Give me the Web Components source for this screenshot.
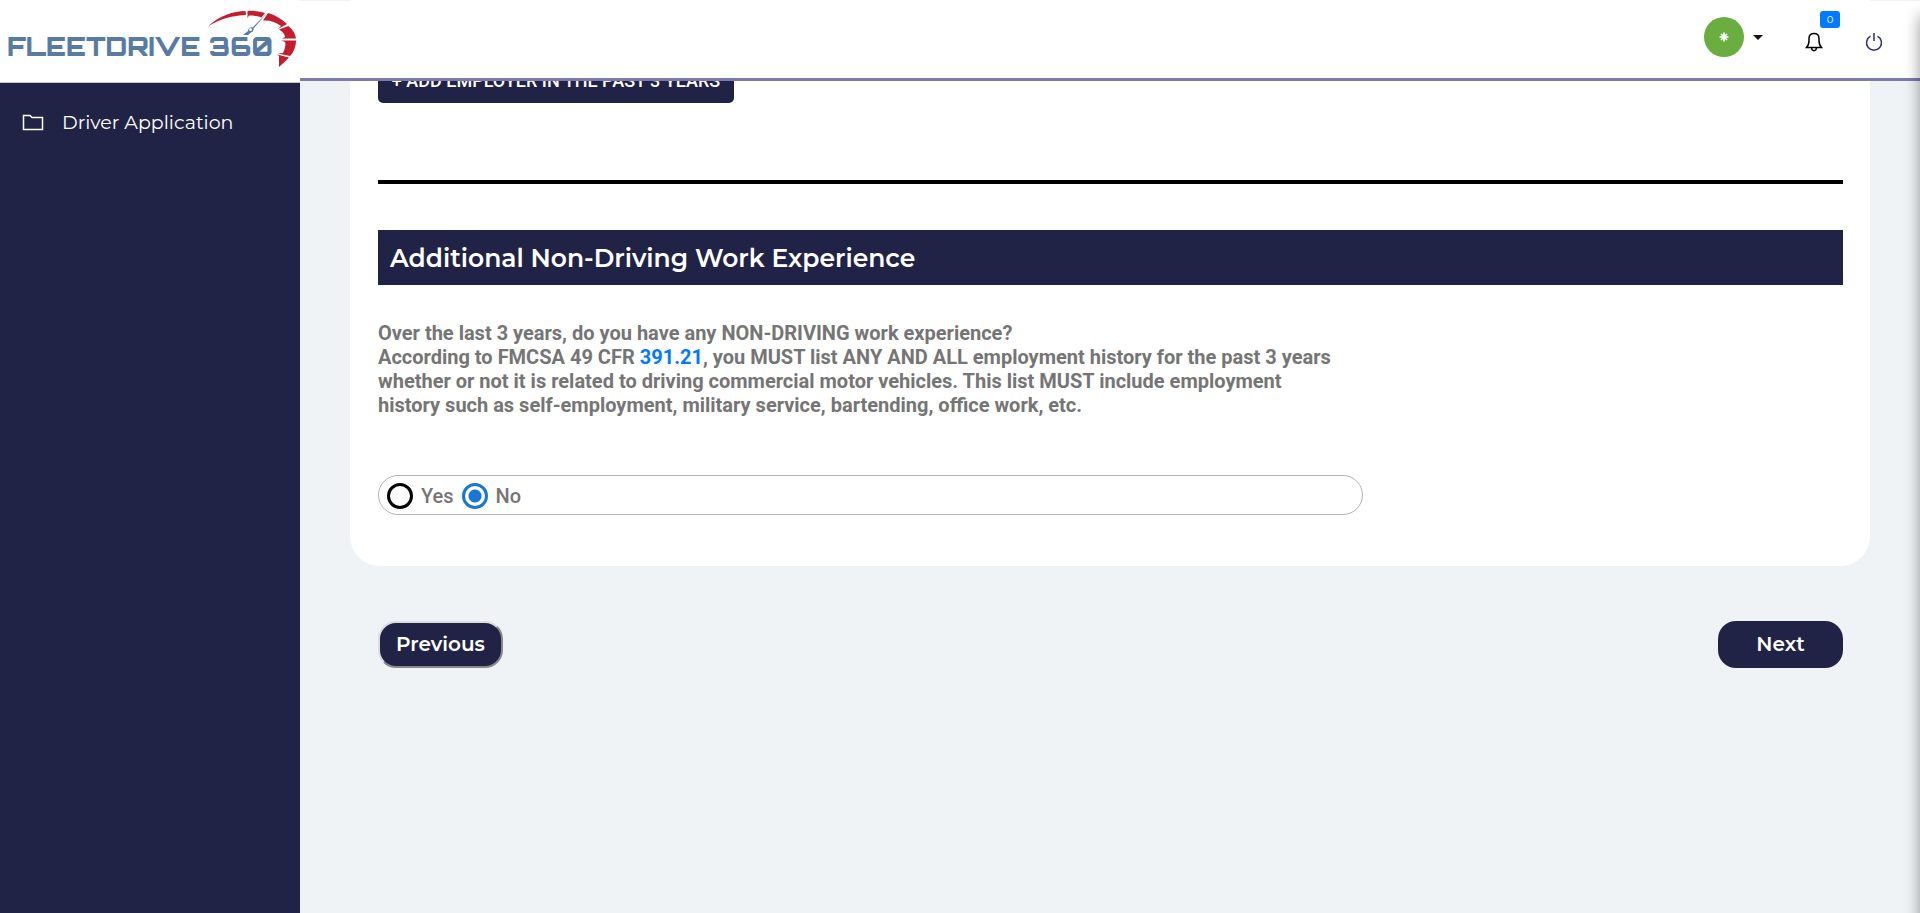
<!DOCTYPE html>
<html lang="en">
<head>
<meta charset="utf-8">
<meta name="viewport" content="width=device-width, initial-scale=1">
<title>Driver Application</title>
<style>
  body { margin: 0; font-family: Roboto, sans-serif; color: #757575; background: #eff3f6; }
</style>
</head>
<body>
<app-shell>
  <side-nav slot="nav"></side-nav>
  <top-bar slot="top"></top-bar>
  <form-card>
    <add-button>+ ADD EMPLOYER IN THE PAST 3 YEARS</add-button>
    <section-title>Additional Non-Driving Work Experience</section-title>
    <work-question></work-question>
  </form-card>
  <page-actions></page-actions>
</app-shell>

<script>
const define = (name, html) => customElements.define(name, class extends HTMLElement {
  constructor() {
    super();
    this.attachShadow({ mode: "open" }).innerHTML = html;
  }
});

define("app-shell", `
<style>
  :host { display: grid; grid-template-columns: 300px minmax(0, 1fr); min-height: 100vh;
    --navy: #212346; --heading: Montserrat, Inter, sans-serif; overflow: hidden; }
  main { padding: 0 50px 40px; }
  .edge { position: fixed; top: 16px; bottom: -20px; left: 100%; width: 40px; box-shadow: 0 0 16px rgba(0,0,0,.4); z-index: 3; }
</style>
<slot name="nav"></slot>
<div><slot name="top"></slot><main><slot></slot></main></div>
<div class="edge"></div>`);

define("side-nav", `
<style>
  :host { display: flex; flex-direction: column; background: var(--navy); }
  header { background: #fff; border-bottom: 1px solid #c8c9cc; height: 82px; }
  svg { display: block; width: 300px; height: 82px; }
  a { display: flex; align-items: center; gap: 18px; padding: 28px 22px; color: #fff; text-decoration: none;
    font: 400 19px/24px var(--heading); }
  a svg { width: 22px; height: 18px; }
</style>
<header>
  <svg viewBox="0 0 300 82" role="img" aria-label="FleetDrive 360">
    <text x="7" y="56" font-family="Orbitron, 'DejaVu Sans', sans-serif" font-weight="900" font-size="26" fill="#587ba2">FLEETDRIVE 360</text>
    <g fill="#c21e2e">
      <path d="M208 26.500C220 15 233 11.500 245.500 11L246 15C233 15.500 220 18.500 208 26.500Z"/>
      <path d="M247.500 11C254 10.500 259 11.500 265 13L261.500 17.500C256 15.500 252 15.500 249 15.500L247.500 18Z"/>
      <path d="M268 13C275 15 282 19 287 24L278 29L281 26C276 22 270 20 263 20.500Z"/>
      <path d="M288.500 26C293 30 295.500 34 296 38.500L282 38.500L285 37C285 34 282 31 279 29.500Z"/>
      <path d="M296 40.500C296 46 294 52 290 56L278 53.500L283 53C285 49 286 44 285 42L281.500 40.500Z"/>
      <path d="M289 57.500C286 61 282 64 279 67L279 56L277 54.500Z"/>
    </g>
    <path d="M267 13L252.500 27.500A3.500 3.500 0 0 0 248 31L243 35H248L251 32.500A3.500 3.500 0 0 0 253.500 28.500Z" fill="#587ba2"/>
    <circle cx="250.500" cy="29.500" r="1.500" fill="#fff"/>
  </svg>
</header>
<nav><a href="#application">
  <svg viewBox="0 0 22 18" fill="none" stroke="#fff" stroke-width="1.500"><path d="M1.500 1.500H8L10 3.500H20.500V15.500H1.500Z"/></svg>
  <span>Driver Application</span></a></nav>`);

define("top-bar", `
<style>
  :host { position: fixed; top: 1px; left: 300px; right: 0; z-index: 2; box-sizing: border-box; height: 80px;
    display: flex; justify-content: flex-end; align-items: center; gap: 40px; padding: 0 37px 0 20px;
    background: #fff; border-bottom: 3px solid #7d7aae; }
  button { border: 0; padding: 0; background: none; display: flex; align-items: center; font: inherit; }
  .user { gap: 9px; margin: 0 2px 5px 0; }
  .avatar { width: 40px; height: 40px; border-radius: 50%; background: #69ae3f; display: grid; place-items: center; }
  .caret { border: 5px solid transparent; border-top-color: #111; border-bottom: 0; }
  .bell { position: relative; margin-top: 5px; }
  .badge { position: absolute; left: 15px; bottom: 24px; width: 20px; height: 17px; border-radius: 3px;
    background: #007bff; color: #fff; font: 400 10px/17px var(--heading); text-align: center; }
  .power { margin: 5px 0 0 2px; }
  svg { display: block; }
</style>
<button class="user" aria-label="Account"><span class="avatar">
  <svg width="10" height="10" viewBox="0 0 10 10" stroke="#fff" stroke-width="1.700"><path d="M5 .5V9.500M.5 5H9.500M2 2L8 8M8 2L2 8"/></svg></span><span class="caret"></span></button>
<button class="bell" aria-label="Notifications">
  <svg width="18" height="20" viewBox="0 0 18 20" fill="none" stroke="#000" stroke-width="1.500"><path d="M1.500 15.500C3.500 13.500 4 11.500 4 8.500V6.500C4 3.500 6 1.500 9 1.500S14 3.500 14 6.500V8.500C14 11.500 14.500 13.500 16.500 15.500ZM6.500 16C7 19.500 11 19.500 11.500 16"/></svg>
  <span class="badge">0</span></button>
<button class="power" aria-label="Log out">
  <svg width="18" height="20" viewBox="0 0 18 20" fill="none" stroke="#33307c" stroke-width="1.500"><path d="M9 1V9M5.500 4.200A7.500 7.500 0 1 0 12.500 4.200"/></svg></button>`);

define("form-card", `
<style>
  :host { display: block; background: #fff; border-radius: 0 0 30px 30px; padding: 58px 27px 51px 28px; }
</style><slot></slot>`);

define("add-button", `
<style>
  :host { display: block; margin-bottom: 77px; }
  button { display: block; min-width: 356px; height: 45px; padding: 0 10px; border: 0; border-radius: 5px; background: var(--navy); color: #fff;
    font: 500 18px/45px Roboto, sans-serif; }
</style><button><slot></slot></button>`);

define("section-title", `
<style>
  :host { display: block; }
  hr { margin: 0 0 46px; border: 0; height: 4px; background: #000; }
  h2 { margin: 0; padding: 1px 12px 0; background: var(--navy); color: #fff; font: 600 25px/54px var(--heading); }
</style><hr><h2><slot></slot></h2>`);

define("work-question", `
<style>
  :host { display: block; max-width: 985px; }
  fieldset { margin: 0; padding: 0; border: 0; min-width: 0; }
  legend { box-sizing: border-box; max-width: 960px; padding: 36px 0 0; font: 700 20px/24px Roboto, sans-serif; }
  p { margin: 0; }
  a { color: #007bff; text-decoration: none; }
  .options { display: flex; align-items: center; gap: 8px; box-sizing: border-box; height: 40px; margin-top: 58px; padding: 1px 8px 0;
    border: 1px solid #b5b5b5; border-radius: 20px; }
  label { display: flex; align-items: center; gap: 8px; font: 500 20px/24px Roboto, sans-serif; }
  input { appearance: none; box-sizing: border-box; margin: 0; width: 26px; height: 26px; border: 3px solid #000; border-radius: 50%; }
  input:checked { border-color: #1976d2; background: radial-gradient(circle, #1976d2 6px, transparent 7px); }
</style>
<fieldset>
  <legend><p>Over the last 3 years, do you have any NON-DRIVING work experience?</p>
  <p>According to FMCSA 49 CFR <a href="#391.21">391.21</a><span>, you MUST list ANY AND ALL employment history for the past 3 years</span>
  <span>whether or not it is related to driving commercial motor vehicles. This list MUST include employment history such as self-employment, military service, bartending, office work, etc.</span></p></legend>
  <div class="options">
    <label><input type="radio" name="work" value="yes">Yes</label>
    <label><input type="radio" name="work" value="no" checked>No</label>
  </div>
</fieldset>`);

define("page-actions", `
<style>
  :host { display: flex; justify-content: space-between; padding: 55px 27px 0 28px; }
  button { box-sizing: border-box; width: 125px; height: 47px; padding: 0 0 2px; border: 0; border-radius: 18px; background: var(--navy);
    color: #fff; font: 600 20px/24px var(--heading); }
  .prev { border: 2px outset #ddd; }
</style>
<button class="prev">Previous</button><button>Next</button>`);
</script>
</body>
</html>
